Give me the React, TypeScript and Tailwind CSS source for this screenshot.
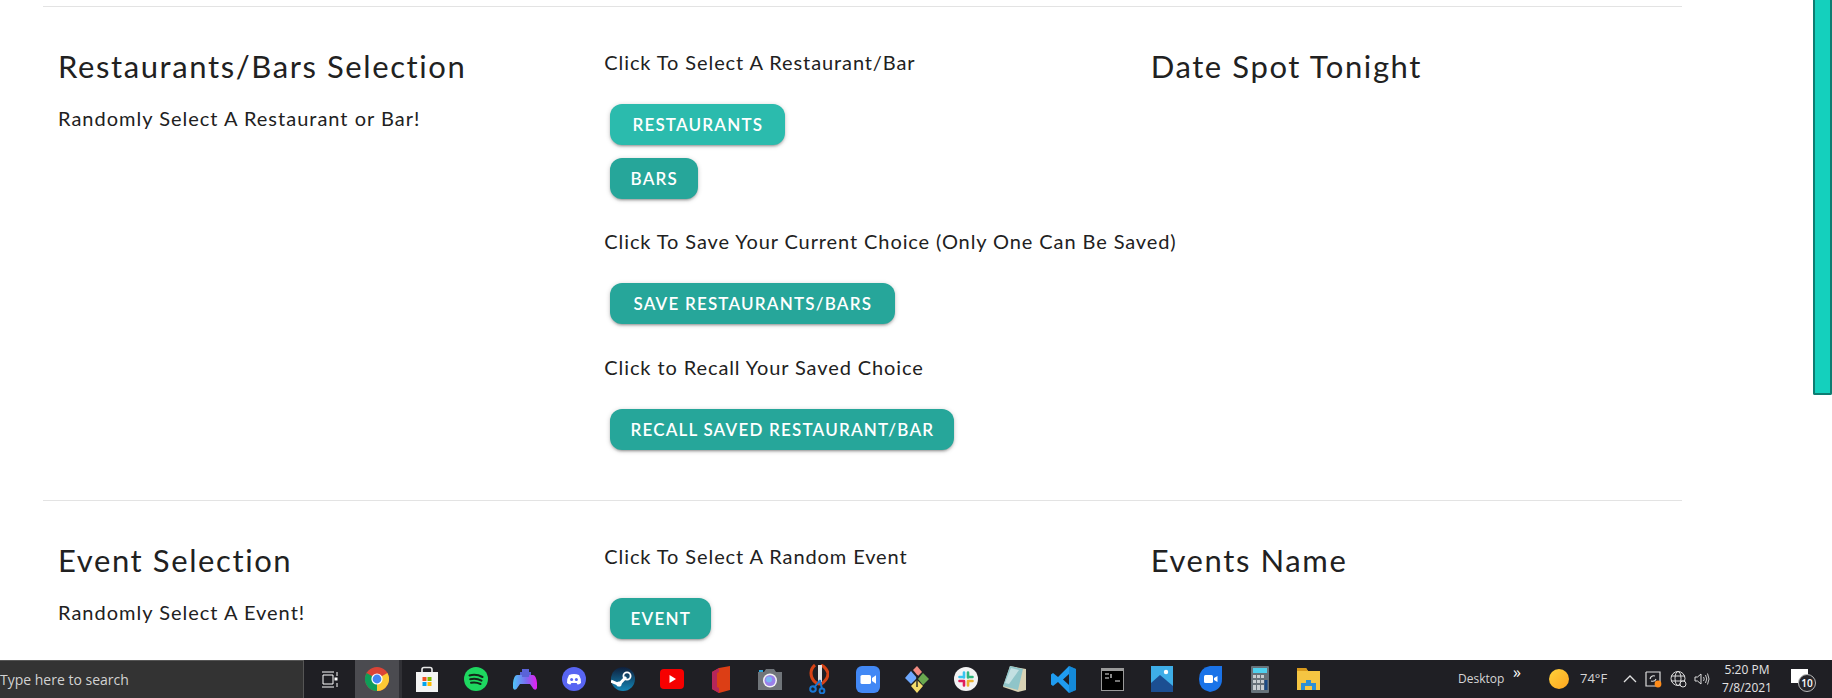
import type { ReactNode } from "react";

const BTN_SHADOW =
  "shadow-[0_2px_2px_0_rgba(0,0,0,0.14),0_3px_1px_-2px_rgba(0,0,0,0.12),0_1px_5px_0_rgba(0,0,0,0.2)]";

function Btn({ w, hover, children }: { w: string; hover?: boolean; children: ReactNode }) {
  return (
    <div
      className={`${w} ${hover ? "bg-[#2bbbad]" : "bg-[#26a69a]"} ${BTN_SHADOW} h-[41px] ml-[6px] rounded-[12px] flex items-center justify-center text-white text-[17px] font-semibold tracking-[1.2px] uppercase whitespace-nowrap`}
    >
      {children}
    </div>
  );
}

function Section({ title, sub, right, children }: { title: string; sub: string; right: string; children: ReactNode }) {
  return (
    <section className="grid grid-cols-3 border-t border-[#e3e3e3] ml-[43px] w-[1639px]">
      <div className="px-[15px] pt-[39px]">
        <h2 className="text-[31px] leading-[40px] tracking-[1.6px] text-[#212121]">{title}</h2>
        <p className="mt-[18px] text-[20px] leading-[28px] tracking-[1px] text-[#212121]">{sub}</p>
      </div>
      <div className="px-[15px] pt-[41px]">{children}</div>
      <div className="px-[15px] pt-[39px]">
        <h2 className="text-[31px] leading-[40px] tracking-[1.6px] text-[#212121]">{right}</h2>
      </div>
    </section>
  );
}

function Label({ children }: { children: ReactNode }) {
  return <p className="text-[20px] leading-[28px] tracking-[0.9px] text-[#212121] whitespace-nowrap">{children}</p>;
}

function Slot({ children }: { children: ReactNode }) {
  return <div className="w-[49px] h-full flex items-center justify-center shrink-0">{children}</div>;
}

const icons: ReactNode[] = [
  // store
  <svg key="store" width="24" height="26" viewBox="0 0 24 26">
    <path d="M7 7V3.5Q7 1.5 9 1.5H15Q17 1.5 17 3.5V7" fill="none" stroke="#e8e8e8" strokeWidth="1.6" />
    <rect x="1" y="6" width="22" height="20" fill="#f4f4f4" />
    <rect x="7.5" y="11" width="4" height="4" fill="#f25022" />
    <rect x="12.5" y="11" width="4" height="4" fill="#7fba00" />
    <rect x="7.5" y="16" width="4" height="4" fill="#00a4ef" />
    <rect x="12.5" y="16" width="4" height="4" fill="#ffb900" />
  </svg>,
  // spotify
  <svg key="spotify" width="24" height="24" viewBox="0 0 24 24">
    <circle cx="12" cy="12" r="12" fill="#1ed760" />
    <path d="M5.5 8.5Q12 6.5 18.5 10M6.2 12.3Q12 10.8 17.5 13.6M7 15.8Q12 14.8 16.5 17" fill="none" stroke="#14261a" strokeWidth="2" strokeLinecap="round" />
  </svg>,
  // game controller
  <svg key="game" width="26" height="24" viewBox="0 0 26 24">
    <defs>
      <linearGradient id="pad" x1="0" x2="1">
        <stop offset="0" stopColor="#4fc3f7" />
        <stop offset="0.55" stopColor="#7a6cf0" />
        <stop offset="1" stopColor="#e81cf0" />
      </linearGradient>
    </defs>
    <path d="M5 8H21Q24 8 25 16L25 21Q24 24 21.5 22L18 17H8L4.5 22Q2 24 1 21L1 16Q2 8 5 8Z" fill="url(#pad)" />
    <rect x="10" y="2" width="7" height="8" fill="#5a63d8" />
    <rect x="8" y="5" width="11" height="3" fill="#5a63d8" />
  </svg>,
  // discord
  <svg key="discord" width="24" height="24" viewBox="0 0 24 24">
    <circle cx="12" cy="12" r="12" fill="#5865f2" />
    <path d="M7 8Q12 6 17 8Q19 11 19 16Q17 17.5 15.5 17.5L14.6 16H9.4L8.5 17.5Q7 17.5 5 16Q5 11 7 8Z" fill="#fff" />
    <circle cx="9.6" cy="12.4" r="1.5" fill="#5865f2" />
    <circle cx="14.4" cy="12.4" r="1.5" fill="#5865f2" />
  </svg>,
  // steam
  <svg key="steam" width="24" height="24" viewBox="0 0 24 24">
    <defs>
      <linearGradient id="steam" x1="0" x2="0" y1="0" y2="1">
        <stop offset="0" stopColor="#0f1f3c" />
        <stop offset="1" stopColor="#1387b8" />
      </linearGradient>
    </defs>
    <circle cx="12" cy="12" r="12" fill="url(#steam)" />
    <path d="M0 14L8 17.5L15 10" fill="none" stroke="#fff" strokeWidth="3" />
    <circle cx="16" cy="9" r="3.6" fill="none" stroke="#fff" strokeWidth="1.8" />
    <circle cx="8" cy="17" r="2.6" fill="#fff" />
  </svg>,
  // youtube
  <svg key="yt" width="24" height="20" viewBox="0 0 24 20">
    <rect width="24" height="20" rx="4" fill="#f60000" />
    <path d="M9.5 6L16 10L9.5 14Z" fill="#fff" />
  </svg>,
  // office
  <svg key="office" width="20" height="27" viewBox="0 0 20 27">
    <path d="M8 2L19 0V24L8 27L1 23V6Z" fill="#dc3e15" />
    <path d="M8 2L1 6V23L8 27V22L6 21V7L8 6Z" fill="#b5265a" />
  </svg>,
  // camera
  <svg key="cam" width="24" height="22" viewBox="0 0 24 22">
    <path d="M0 4H6L8 1H16L18 4H24V22H0Z" fill="#70757a" />
    <rect x="1" y="2" width="4" height="2" fill="#2aa4dc" />
    <circle cx="12" cy="12.5" r="7" fill="#f2f2f2" />
    <circle cx="12" cy="12.5" r="5.5" fill="#9a80ea" />
    <circle cx="11" cy="11.5" r="3" fill="#7ab8f2" />
  </svg>,
  // snip
  <svg key="snip" width="20" height="30" viewBox="0 0 20 30">
    <path d="M6 1Q0 6 3 14Q6 20 12 20Q19 16 19 9Q17 3 12 1" fill="none" stroke="#d84315" strokeWidth="3" />
    <path d="M11 1V18" stroke="#e6e6e6" strokeWidth="4" />
    <path d="M11 16L5 24M11 16L13 25" stroke="#1976d2" strokeWidth="2" />
    <circle cx="4" cy="25" r="2.8" fill="none" stroke="#1976d2" strokeWidth="2" />
    <circle cx="13" cy="27" r="2.4" fill="none" stroke="#1976d2" strokeWidth="2" />
  </svg>,
  // zoom
  <svg key="zoom" width="24" height="27" viewBox="0 0 24 27">
    <rect width="24" height="27" rx="6" fill="#4288f5" />
    <rect x="4.5" y="9" width="10.5" height="9" rx="1.6" fill="#fff" />
    <path d="M16 12L20 9.2V17.8L16 15Z" fill="#fff" />
  </svg>,
  // git client
  <svg key="git" width="24" height="28" viewBox="0 0 24 28">
    <path d="M8 5L12 1L17 7L13 11Z" fill="#f28b82" />
    <path d="M6 6L12 13L6 19L0 13Z" fill="#6ea8fe" />
    <path d="M18 8L24 14L18 20L13 14Z" fill="#6aa84f" />
    <path d="M12 15L18 21L12 28L6 21Z" fill="#f4dc6b" />
    <path d="M12 10V22" stroke="#222" strokeWidth="1.4" />
  </svg>,
  // slack
  <svg key="slack" width="24" height="24" viewBox="0 0 24 24">
    <circle cx="12" cy="12" r="12" fill="#f3f3f3" />
    <path d="M10 5.5V10.5M5.5 10H10" stroke="#36c5f0" strokeWidth="2.6" strokeLinecap="round" />
    <path d="M14 5.5V10.5M14 10H18.5" stroke="#2eb67d" strokeWidth="2.6" strokeLinecap="round" />
    <path d="M14 14V18.5M14 14H18.5" stroke="#ecb22e" strokeWidth="2.6" strokeLinecap="round" />
    <path d="M10 14V18.5M5.5 14H10" stroke="#e01e5a" strokeWidth="2.6" strokeLinecap="round" />
  </svg>,
  // notepad
  <svg key="note" width="24" height="26" viewBox="0 0 24 26">
    <path d="M7 0L23 3V24L15 26L0 21Z" fill="#d8d2b4" />
    <path d="M7 0L20 3L15 24L0 20Z" fill="#8fc5c9" />
    <path d="M8 2L16 4L6 18L2 17Z" fill="#c3e0e2" />
  </svg>,
  // vscode
  <svg key="vsc" width="25" height="27" viewBox="0 0 25 27">
    <path d="M18 0L25 3V24L18 27L7 16L2 20L0 18.5V8.5L2 7L7 11ZM18 8L12 13.5L18 19Z" fill="#1f9cf0" fillRule="evenodd" />
    <path d="M18 0L25 3V24L18 27Z" fill="#0b7ac4" opacity="0.55" />
  </svg>,
  // cmd
  <svg key="cmd" width="23" height="23" viewBox="0 0 23 23">
    <rect width="23" height="23" fill="#9a9a9a" />
    <rect x="1" y="3" width="21" height="19" fill="#000" />
    <path d="M4 6H8M4 10H8M10 6V10M14 13H19" stroke="#e8e8e8" strokeWidth="1.2" />
  </svg>,
  // photos
  <svg key="photo" width="22" height="26" viewBox="0 0 22 26">
    <rect width="22" height="26" fill="#3eaee8" />
    <path d="M0 26V17L9 9L22 20V26Z" fill="#1c4f92" />
    <circle cx="15" cy="6" r="2.2" fill="#fff" />
  </svg>,
  // duo
  <svg key="duo" width="23" height="26" viewBox="0 0 23 26">
    <path d="M11 0H23V13Q23 24 11 26Q0 24 0 13Q0 2 11 0Z" fill="#1a73e8" />
    <rect x="5" y="9" width="9" height="8" rx="1.5" fill="#fff" />
    <path d="M15 12L18.5 10V16L15 14Z" fill="#fff" />
  </svg>,
  // calculator
  <svg key="calc" width="18" height="27" viewBox="0 0 18 27">
    <rect width="18" height="27" rx="1" fill="#67727a" />
    <rect x="2" y="2" width="14" height="5" fill="#4fd0ee" />
    <path d="M2 9H5V12H2ZM6 9H9V12H6ZM10 9H13V12H10ZM2 14H5V17H2ZM6 14H9V17H6ZM10 14H13V17H10ZM2 19H5V24H2ZM6 19H9V24H6ZM10 19H13V24H10Z" fill="#c8ced2" />
    <rect x="13.5" y="14" width="3" height="10" fill="#1a4a86" />
  </svg>,
  // explorer
  <svg key="exp" width="23" height="22" viewBox="0 0 23 22">
    <path d="M0 2Q0 0 2 0H9L11 3H23V22H0Z" fill="#f5c542" />
    <path d="M0 0H9L11 3H0Z" fill="#d99a1c" />
    <path d="M4 22V15H9V12H14V15H19V22H15V18H8V22Z" fill="#2d8fd5" />
  </svg>,
];

function Tray() {
  return (
    <div className="flex items-center h-full text-[#d6d6d6] font-['Open_Sans',sans-serif]">
      <span className="text-[12px] leading-none w-[55px]">Desktop</span>
      <span className="text-[16px] text-white leading-none -mt-[14px] w-[36px]">»</span>
      <span className="w-[20px] h-[20px] rounded-full bg-gradient-to-br from-[#ffd23a] to-[#ffa51e]" />
      <span className="text-[13px] ml-[11px] w-[38px]">74°F</span>
      <svg width="14" height="8" viewBox="0 0 14 8" className="ml-[5px]">
        <path d="M1 7L7 1L13 7" fill="none" stroke="#e0e0e0" strokeWidth="1.3" />
      </svg>
      <svg width="17" height="17" viewBox="0 0 17 17" className="ml-[8px]">
        <path d="M1 1H15V12M12 15H1V1" fill="none" stroke="#ddd" strokeWidth="1.2" />
        <path d="M5 8Q6 4 10 5M11 8Q10 11 6 10" fill="none" stroke="#ddd" strokeWidth="1.1" />
        <circle cx="13" cy="13" r="3.4" fill="#ff8c1a" />
      </svg>
      <svg width="17" height="18" viewBox="0 0 17 18" className="ml-[8px]">
        <circle cx="8" cy="8.5" r="7" fill="none" stroke="#ddd" strokeWidth="1" />
        <ellipse cx="8" cy="8.5" rx="3" ry="7" fill="none" stroke="#ddd" strokeWidth="1" />
        <path d="M1 6H15M1 11H15" stroke="#ddd" strokeWidth="1" />
        <circle cx="13" cy="14" r="3" fill="#1f1f24" stroke="#ddd" strokeWidth="1" />
      </svg>
      <svg width="16" height="14" viewBox="0 0 16 14" className="ml-[7px]">
        <path d="M1 5H3.5L7 2V12L3.5 9H1Z" fill="none" stroke="#ddd" strokeWidth="1" />
        <path d="M9.5 5Q11 7 9.5 9M11.5 3Q14 7 11.5 11M13.5 1.5Q16.5 7 13.5 12.5" fill="none" stroke="#ddd" strokeWidth="0.9" />
      </svg>
      <div className="w-[66px] ml-[4px] text-center text-[12px] leading-[18px] text-[#e4e4e4]">
        <div>5:20 PM</div>
        <div>7/8/2021</div>
      </div>
      <div className="relative w-[17px] h-[14px] ml-[11px] -mt-[6px] bg-white">
        <span className="absolute left-[7px] top-[5px] w-[18px] h-[18px] rounded-full bg-[#26262b] border border-[#bbb] text-white text-[10px] leading-[16px] text-center font-semibold">
          10
        </span>
      </div>
    </div>
  );
}

export default function App() {
  return (
    <div className="w-[1832px] h-[698px] flex flex-col overflow-hidden bg-white font-[Lato,sans-serif]">
      <div className="h-[660px] flex overflow-hidden">
        <main className="w-[1813px] pt-[6px] shrink-0">
          <Section title="Restaurants/Bars Selection" sub="Randomly Select A Restaurant or Bar!" right="Date Spot Tonight">
            <Label>Click To Select A Restaurant/Bar</Label>
            <div className="mt-[28px] flex flex-col gap-[13px]">
              <Btn w="w-[175px]" hover>Restaurants</Btn>
              <Btn w="w-[88px]">Bars</Btn>
            </div>
            <div className="mt-[28px]"><Label>Click To Save Your Current Choice (Only One Can Be Saved)</Label></div>
            <div className="mt-[28px]"><Btn w="w-[285px]">Save Restaurants/Bars</Btn></div>
            <div className="mt-[29px]"><Label>Click to Recall Your Saved Choice</Label></div>
            <div className="mt-[28px] mb-[50px]"><Btn w="w-[344px]">Recall Saved Restaurant/Bar</Btn></div>
          </Section>
          <Section title="Event Selection" sub="Randomly Select A Event!" right="Events Name">
            <Label>Click To Select A Random Event</Label>
            <div className="mt-[28px]"><Btn w="w-[101px]">Event</Btn></div>
          </Section>
        </main>
        <div className="w-[19px] shrink-0">
          <div className="h-[395px] bg-[#14d0bd] border-2 border-t-0 border-[#0d7d72] rounded-b-[2px]" />
        </div>
      </div>
      <footer className="h-[38px] flex items-center bg-[#1f1f24] font-['Open_Sans',sans-serif]">
        <div className="w-[304px] h-full bg-[#333333] border-t border-r border-[#555] flex items-center text-[14px] text-[#d2d2d2]">
          Type here to search
        </div>
        <div className="w-[51px] h-full flex items-center justify-center">
          <svg width="17" height="17" viewBox="0 0 17 17">
            <path d="M1 1H13M1 16H13M2 4H12V13H2ZM16 1V5M16 12V16" fill="none" stroke="#fff" strokeWidth="1" />
            <rect x="13.5" y="6.5" width="3" height="3" fill="#fff" />
          </svg>
        </div>
        <div className="w-[44px] h-full bg-[#4b4b50] flex items-center justify-center">
          <svg width="24" height="24" viewBox="0 0 24 24">
            <circle cx="12" cy="12" r="12" fill="#db4437" />
            <path d="M12 12L1.6 6A12 12 0 0 0 12 24Z" fill="#0f9d58" />
            <path d="M12 12L22.4 6A12 12 0 0 1 12 24Z" fill="#fcc934" />
            <circle cx="12" cy="12" r="5.6" fill="#fff" />
            <circle cx="12" cy="12" r="4.4" fill="#4285f4" />
          </svg>
        </div>
        <div className="w-[3px] h-full bg-[#303035]" />
        {icons.map((icon, i) => (
          <Slot key={i}>{icon}</Slot>
        ))}
        <div className="ml-[125px]">
          <Tray />
        </div>
      </footer>
    </div>
  );
}
